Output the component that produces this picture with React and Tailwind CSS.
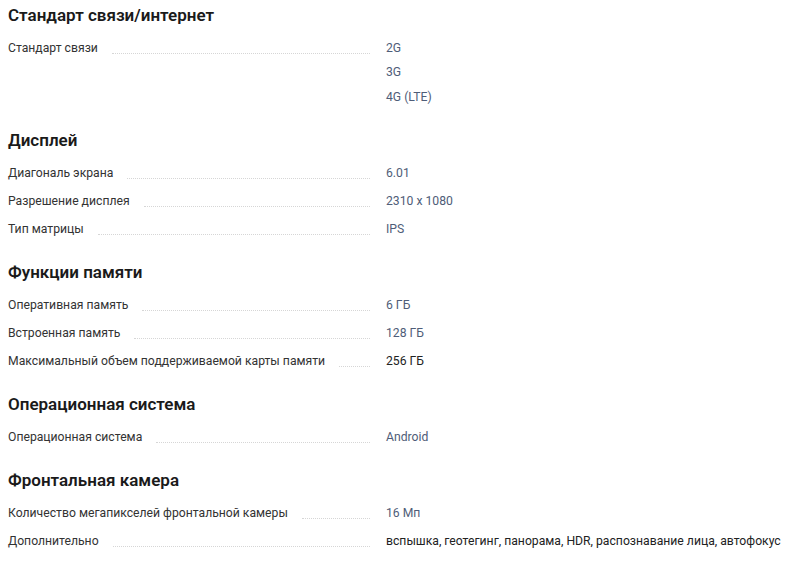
const sections = [
  {
    title: "Стандарт связи/интернет",
    rows: [{ label: "Стандарт связи", values: ["2G", "3G", "4G (LTE)"] }],
  },
  {
    title: "Дисплей",
    rows: [
      { label: "Диагональ экрана", values: ["6.01"] },
      { label: "Разрешение дисплея", values: ["2310 x 1080"] },
      { label: "Тип матрицы", values: ["IPS"] },
    ],
  },
  {
    title: "Функции памяти",
    rows: [
      { label: "Оперативная память", values: ["6 ГБ"] },
      { label: "Встроенная память", values: ["128 ГБ"] },
      { label: "Максимальный объем поддерживаемой карты памяти", values: ["256 ГБ"], plain: true },
    ],
  },
  {
    title: "Операционная система",
    rows: [{ label: "Операционная система", values: ["Android"] }],
  },
  {
    title: "Фронтальная камера",
    rows: [
      { label: "Количество мегапикселей фронтальной камеры", values: ["16 Мп"] },
      {
        label: "Дополнительно",
        values: ["вспышка, геотегинг, панорама, HDR, распознавание лица, автофокус"],
        plain: true,
      },
    ],
  },
];

function SpecRow({ row }) {
  return (
    <div className="flex">
      <div className="w-[362px] shrink-0 flex items-start h-[20.5px]">
        <span className="text-[12.2px] leading-[20.5px] text-[#333] whitespace-nowrap">{row.label}</span>
        <span className="flex-1 ml-[14px] mt-[15px] border-b border-dotted border-[#d6d6d6]" />
      </div>
      <div className="ml-4 flex flex-col gap-1">
        {row.values.map((v) => (
          <span
            key={v}
            className={
              "text-[12.2px] leading-[20.5px] whitespace-nowrap " +
              (row.plain ? "text-[#222]" : "text-[#4f5d78]")
            }
          >
            {v}
          </span>
        ))}
      </div>
    </div>
  );
}

export default function App() {
  return (
    <div
      className="bg-white w-[802px] h-[563px] overflow-hidden px-2 pt-[3px] flex flex-col gap-[21px]"
      style={{ fontFamily: "Roboto, 'Noto Sans', sans-serif" }}
    >
      {sections.map((s) => (
        <div key={s.title}>
          <h2 className="text-[17px] leading-6 font-semibold text-[#1a1a1a]">{s.title}</h2>
          <div className="mt-[10.5px] flex flex-col gap-[7.5px]">
            {s.rows.map((r) => (
              <SpecRow key={r.label} row={r} />
            ))}
          </div>
        </div>
      ))}
    </div>
  );
}
